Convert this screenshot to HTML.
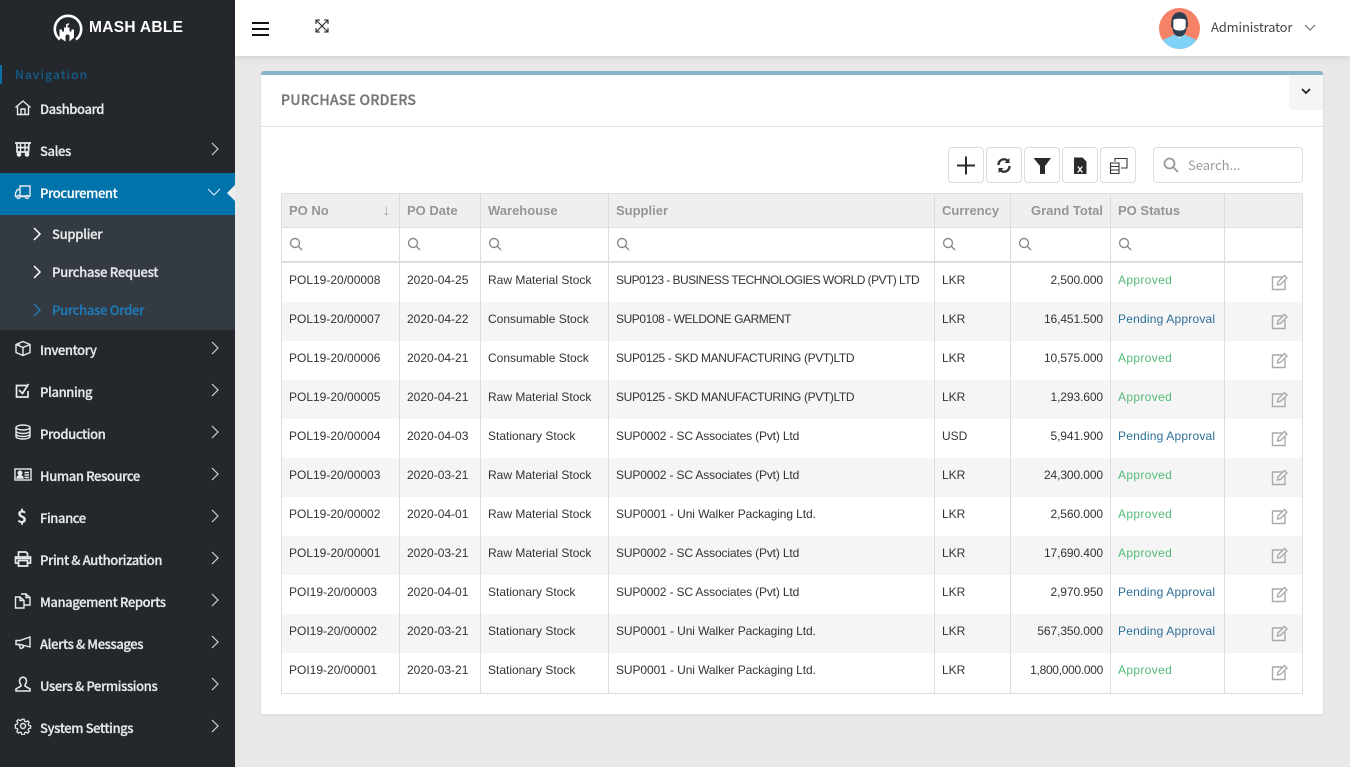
<!DOCTYPE html>
<html><head><meta charset="utf-8"><style>
*{box-sizing:border-box}
html,body{margin:0;padding:0;width:1350px;height:767px;overflow:hidden;background:#e8e8e8;font-family:"Liberation Sans",sans-serif;position:relative}
.side{position:absolute;left:0;top:0;width:235px;height:767px;background:#24282d}
.it{position:absolute;left:40px;font:500 13px/20px "Noto Sans CJK JP",sans-serif;color:#e6e8ea;white-space:nowrap;letter-spacing:-.4px;-webkit-text-stroke:.25px #e6e8ea}
.ic{position:absolute;left:14px;width:18px;height:18px;fill:none;stroke:#e8eaec;stroke-width:1.4}
.ch{position:absolute;left:210px;width:10px;height:14px;fill:none;stroke:#d0d3d6;stroke-width:1.2}
.sub{position:absolute;left:52px;font:500 13px/20px "Noto Sans CJK JP",sans-serif;color:#e6e8ea;white-space:nowrap;letter-spacing:-.3px;-webkit-text-stroke:.25px currentColor}
.top{position:absolute;left:235px;top:0;width:1115px;height:56px;background:#fff;box-shadow:0 1px 6px rgba(0,0,0,.13)}
.card{position:absolute;left:261px;top:71px;width:1062px;height:643px;background:#fff;border-top:4px solid #86b5cd;border-radius:3px 3px 0 0;box-shadow:0 1px 3px rgba(0,0,0,.07)}
.btn{position:absolute;top:147px;height:36px;width:36px;border:1px solid #dcdcdc;border-radius:4px;background:#fff}
.btn svg{position:absolute;left:0;top:0}
table{position:absolute;left:281px;top:193px;width:1021px;border-collapse:collapse;table-layout:fixed;font-size:12px;color:#333}
td,th{border:1px solid #ddd;padding:0 7px;overflow:hidden;white-space:nowrap;text-align:left}
tr.h th{height:34px;background:#efefef;color:#959595;font-weight:bold;font-size:13px}
tr.f td{height:34px;border-bottom:2px solid #ddd}
tbody tr{height:39px}
tbody tr:first-child{height:40px}
tbody td{vertical-align:top;padding-top:10px;border-top:0;border-bottom:0;font-size:12px;line-height:15px}
tbody tr:nth-child(even){background:#f5f5f5}
tbody tr:last-child{height:41px}
tbody tr:last-child td{border-bottom:1px solid #ddd}
.r{text-align:right;letter-spacing:-.1px}
.a{color:#55bb78;letter-spacing:.35px}.p{color:#2d6f98;letter-spacing:.2px}
.s1{letter-spacing:-.55px}.s2{letter-spacing:-.36px}.s3{letter-spacing:-.09px}.s4{letter-spacing:-.15px}.s5{letter-spacing:-.44px}
.e{display:block;margin:1px 0 0 39px;width:17px;height:17px;fill:none;stroke:#aaa;stroke-width:1.4}
.m{display:block;width:14px;height:14px;fill:none;stroke:#8a8a8a;stroke-width:1.4}
</style></head><body>

<div class="side">
<svg style="position:absolute;left:53px;top:13px" width="30" height="30" viewBox="0 0 30 30"><path d="M7 26.500A13.200 13.200 0 1 1 23 26.500" fill="none" stroke="#fff" stroke-width="2.600"/><path d="M6.500 24.500V16.500h2.500v2h2v-4h2v-3l3-1.500v1.500l-1.500 1v2h2v4h2v-2h2.500v8l-4.500 4v-5a2 2 0 0 0-4 0v5z" fill="#fff"/></svg>
<div style="position:absolute;left:89px;top:18px;font:bold 15.500px/20px 'Liberation Sans',sans-serif;color:#fff;letter-spacing:.3px;white-space:nowrap">MASH ABLE</div>
<div style="position:absolute;left:0;top:65px;width:2px;height:19px;background:#0b6fa6"></div>
<div style="position:absolute;left:15px;top:66px;font:500 12px/17px 'Noto Sans CJK JP',sans-serif;color:#135f8c;letter-spacing:1.100px">Navigation</div>

<div style="position:absolute;left:0;top:173px;width:235px;height:42px;background:#0073aa"></div>
<div style="position:absolute;left:0;top:215px;width:235px;height:115px;background:#343a42"></div>
<svg style="position:absolute;left:227px;top:185px" width="8" height="16"><path d="M8 0L0 8l8 8z" fill="#eee"/></svg>

<svg class="ic" style="top:99px" viewBox="0 0 18 18"><path d="M1.500 8.500L9 2l7.500 6.500M3.500 7.500V15.500H14.500V7.500M7 15.500V10h4v5.500"/></svg><div class="it" style="top:99px">Dashboard</div>
<svg class="ic" style="top:140px" viewBox="0 0 18 18"><path d="M1 3H17M3 3V12H14.500L15 3M3 7.500H15" stroke-width="1.700"/><path d="M6.500 3V12M11 3V12"/><circle cx="5" cy="14.500" r="1.600" fill="#e8eaec"/><circle cx="13" cy="14.500" r="1.600" fill="#e8eaec"/></svg><div class="it" style="top:141px">Sales</div><svg class="ch" style="top:142px" viewBox="0 0 10 14"><path d="M2 1l6 6-6 6"/></svg>
<svg class="ic" style="top:183px" viewBox="0 0 18 18"><path d="M6 13V3H16V13H6M6 6.500H3.500L1.500 10V13.500H4M6 13.500H12"/><circle cx="4.500" cy="14" r="1.500"/><circle cx="13" cy="14" r="1.500"/></svg><div class="it" style="top:183px;color:#fff">Procurement</div><svg style="position:absolute;left:207px;top:187px;fill:none;stroke:#d8e8f0;stroke-width:1.200" width="14" height="10"><path d="M1 2l6 6 6-6"/></svg>

<svg class="ch" style="left:32px;top:227px;stroke:#fff;stroke-width:1.500" viewBox="0 0 10 14"><path d="M2 1l6 6-6 6"/></svg><div class="sub" style="top:224px">Supplier</div>
<svg class="ch" style="left:32px;top:265px;stroke:#fff;stroke-width:1.500" viewBox="0 0 10 14"><path d="M2 1l6 6-6 6"/></svg><div class="sub" style="top:262px">Purchase Request</div>
<svg class="ch" style="left:32px;top:303px;stroke:#1f7ab8;stroke-width:1.500" viewBox="0 0 10 14"><path d="M2 1l6 6-6 6"/></svg><div class="sub" style="top:300px;color:#1f7ab8">Purchase Order</div>

<svg class="ic" style="top:339px" viewBox="0 0 18 18"><path d="M2 5.500L9 2.500l7 3v8l-7 3-7-3zM2 5.500l7 3 7-3M9 8.500v8M5 4v3"/></svg><div class="it" style="top:340px">Inventory</div><svg class="ch" style="top:341px" viewBox="0 0 10 14"><path d="M2 1l6 6-6 6"/></svg>
<svg class="ic" style="top:382px" viewBox="0 0 18 18"><path d="M13.500 3.500H2.500V15H14V9M5 8l3.500 3.500L14.500 2" stroke-width="1.700"/></svg><div class="it" style="top:382px">Planning</div><svg class="ch" style="top:383px" viewBox="0 0 10 14"><path d="M2 1l6 6-6 6"/></svg>
<svg class="ic" style="top:423px" viewBox="0 0 18 18"><ellipse cx="9" cy="4.500" rx="7" ry="2.500"/><path d="M2 4.500v9c0 1.400 3 2.500 7 2.500s7-1.100 7-2.500v-9M2 8c0 1.400 3 2.500 7 2.500s7-1.100 7-2.500M2 11c0 1.400 3 2.500 7 2.500s7-1.100 7-2.500"/></svg><div class="it" style="top:424px">Production</div><svg class="ch" style="top:425px" viewBox="0 0 10 14"><path d="M2 1l6 6-6 6"/></svg>
<svg class="ic" style="top:466px" viewBox="0 0 18 18"><rect x="1" y="3" width="16" height="11"/><path d="M10.500 6.500H15M10.500 9H15M10.500 11.500H15"/><circle cx="6" cy="7" r="1.800" fill="#e8eaec"/><path d="M3 12c0-3 6-3 6 0z" fill="#e8eaec"/></svg><div class="it" style="top:466px">Human Resource</div><svg class="ch" style="top:467px" viewBox="0 0 10 14"><path d="M2 1l6 6-6 6"/></svg>
<div style="position:absolute;left:17px;top:505px;font:bold 17px/22px 'Noto Sans CJK JP',sans-serif;color:#e8eaec">$</div><div class="it" style="top:508px">Finance</div><svg class="ch" style="top:509px" viewBox="0 0 10 14"><path d="M2 1l6 6-6 6"/></svg>
<svg class="ic" style="top:550px" viewBox="0 0 18 18"><path d="M4.500 6V2H12l1.500 1.500V6M4 13H1.500V7H16.500V13H14M4.500 10.500H13.500V16H4.500z" stroke-width="1.700"/><path d="M2 8.500h14"/></svg><div class="it" style="top:550px">Print &amp; Authorization</div><svg class="ch" style="top:551px" viewBox="0 0 10 14"><path d="M2 1l6 6-6 6"/></svg>
<svg class="ic" style="top:592px" viewBox="0 0 18 18"><path d="M6 5H1.500V16H10V8.500zM6 5V8.500H10M7 2H12V5.500H16V13H10.500M12 2l4 3.500"/></svg><div class="it" style="top:592px">Management Reports</div><svg class="ch" style="top:593px" viewBox="0 0 10 14"><path d="M2 1l6 6-6 6"/></svg>
<svg class="ic" style="top:634px" viewBox="0 0 18 18"><path d="M16 3V13L6 10.500H2V6.500H6zM5 10.500l1.500 4 3-1-1-2.500"/></svg><div class="it" style="top:634px">Alerts &amp; Messages</div><svg class="ch" style="top:635px" viewBox="0 0 10 14"><path d="M2 1l6 6-6 6"/></svg>
<svg class="ic" style="top:675px" viewBox="0 0 18 18"><path d="M5.500 6a3.500 3.800 0 1 1 7 0c0 2-1 3-1.500 4v1l5 3v2H2v-2l5-3v-1C6.500 9 5.500 8 5.500 6z" stroke-width="1.600"/></svg><div class="it" style="top:676px">Users &amp; Permissions</div><svg class="ch" style="top:677px" viewBox="0 0 10 14"><path d="M2 1l6 6-6 6"/></svg>
<svg class="ic" style="top:717px" viewBox="0 0 18 18"><circle cx="9" cy="9" r="2.500"/><path d="M7.700 1.500h2.600l.4 2.200 1.500.7 1.900-1.200 1.800 1.800-1.200 1.900.7 1.500 2.100.4v2.600l-2.100.4-.7 1.500 1.200 1.900-1.800 1.800-1.900-1.200-1.500.7-.4 2.200H7.700l-.4-2.200-1.500-.7-1.900 1.200-1.800-1.800 1.200-1.900-.7-1.500-2.100-.4V7.400l2.100-.4.700-1.500-1.200-1.900 1.800-1.800 1.900 1.200 1.500-.7z" transform="translate(.9 .9) scale(.9)"/></svg><div class="it" style="top:718px">System Settings</div><svg class="ch" style="top:719px" viewBox="0 0 10 14"><path d="M2 1l6 6-6 6"/></svg>
</div>

<div class="top">
<div style="position:absolute;left:17px;top:22px;width:17px;height:14px;border-top:2px solid #111;border-bottom:2px solid #111"></div>
<div style="position:absolute;left:17px;top:28px;width:17px;height:2px;background:#111"></div>
<svg style="position:absolute;left:80px;top:19px;fill:none;stroke:#222;stroke-width:1.100" width="14" height="14" viewBox="0 0 14 14"><path d="M1 1l12 12M13 1L1 13M1 5V1h4M9 1h4v4M1 9v4h4M9 13h4V9"/></svg>
<svg style="position:absolute;left:924px;top:8px" width="41" height="41" viewBox="0 0 40 40"><defs><clipPath id="c"><circle cx="20" cy="20" r="20"/></clipPath></defs><g clip-path="url(#c)"><rect width="40" height="40" fill="#f58166"/><path d="M4 31l11-5h10l11 5v9H4z" fill="#7fd1f7"/><path d="M15.500 26l4.500 3.500 4.500-3.500-.500-4h-8z" fill="#fff"/><path d="M12 19C11 8 15 4 20 4s9 4 8 15z" fill="#2c3e50"/><path d="M13 18l2 3h10l2-3c0 6-3 10-7 10s-7-4-7-10z" fill="#2c3e50"/><path d="M14 11.500c3-1.500 9-1.500 12 0V18c0 3-2.500 4-6 4s-6-1-6-4z" fill="#fff"/></g></svg>
<div style="position:absolute;left:976px;top:17px;font:13px/20px 'Noto Sans CJK JP',sans-serif;color:#444;white-space:nowrap;letter-spacing:-.15px">Administrator</div>
<svg style="position:absolute;left:1069px;top:24px;fill:none;stroke:#666;stroke-width:1" width="12" height="8"><path d="M1 1l5 5 5-5"/></svg>
</div>

<div class="card"></div>
<div style="position:absolute;left:281px;top:91px;font:500 14px/18px 'Noto Sans CJK JP',sans-serif;color:#757575;white-space:nowrap;letter-spacing:.2px;-webkit-text-stroke:.3px #757575">PURCHASE ORDERS</div>
<div style="position:absolute;left:261px;top:126px;width:1062px;height:1px;background:#e2e2e2"></div>
<div style="position:absolute;left:1289px;top:75px;width:34px;height:35px;background:#f5f5f5;border-radius:0 0 0 4px"></div>
<svg style="position:absolute;left:1301px;top:88px;fill:none;stroke:#222;stroke-width:1.800" width="10" height="7"><path d="M1 1l4 4 4-4"/></svg>

<div class="btn" style="left:948px"><svg width="36" height="36" fill="none" stroke="#2a2a2a" stroke-width="2"><path d="M17 8.500v18M8 17.500h18"/></svg></div>
<div class="btn" style="left:986px;width:36px"><svg width="36" height="36" fill="none" stroke="#333" stroke-width="2.400"><path d="M11.500 17a5.500 5.500 0 0 1 9.500-4M22.500 18a5.500 5.500 0 0 1-9.500 4"/><path d="M22.500 10v5h-5zM11.500 25v-5h5z" fill="#333" stroke="none"/></svg></div>
<div class="btn" style="left:1024px"><svg width="36" height="36"><path d="M8.500 10H26L20 18V26L15 26V18z" fill="#2a2a2a"/></svg></div>
<div class="btn" style="left:1062px"><svg width="36" height="36"><path d="M11 9.500h8.500l4 4V26H11z" fill="#2a2a2a"/><text x="14" y="24.500" font-family="Liberation Sans" font-weight="bold" font-size="11" fill="#fff">x</text></svg></div>
<div class="btn" style="left:1100px"><svg width="36" height="36" fill="none" stroke="#333" stroke-width="1.100"><path d="M14 13.500V10.500H26V20H20M9.500 15H18V25.500H9.500zM9.500 18.500H18M9.500 22H18"/></svg></div>
<div style="position:absolute;left:1153px;top:147px;width:150px;height:36px;border:1px solid #dcdcdc;border-radius:4px"></div>
<svg style="position:absolute;left:1163px;top:157px;fill:none;stroke:#999;stroke-width:1.800" width="16" height="16"><circle cx="6.500" cy="6.500" r="5"/><path d="M10 10l5 5"/></svg>
<div style="position:absolute;left:1188px;top:156px;font:13px/18px 'Noto Sans CJK JP',sans-serif;color:#999">Search...</div>

<table>
<colgroup><col style="width:118px"><col style="width:81px"><col style="width:128px"><col style="width:326px"><col style="width:76px"><col style="width:100px"><col style="width:114px"><col style="width:78px"></colgroup>
<thead>
<tr class="h"><th style="position:relative">PO No<span style="position:absolute;right:9px;top:7px;font-weight:normal;font-size:15px;line-height:20px;color:#999">↓</span></th><th>PO Date</th><th>Warehouse</th><th>Supplier</th><th>Currency</th><th class="r" style="letter-spacing:0">Grand Total</th><th>PO Status</th><th></th></tr>
<tr class="f"><td><svg class="m"><circle cx="6" cy="6" r="4.500"/><path d="M9 9l4 4"/></svg></td><td><svg class="m"><circle cx="6" cy="6" r="4.500"/><path d="M9 9l4 4"/></svg></td><td><svg class="m"><circle cx="6" cy="6" r="4.500"/><path d="M9 9l4 4"/></svg></td><td><svg class="m"><circle cx="6" cy="6" r="4.500"/><path d="M9 9l4 4"/></svg></td><td><svg class="m"><circle cx="6" cy="6" r="4.500"/><path d="M9 9l4 4"/></svg></td><td><svg class="m"><circle cx="6" cy="6" r="4.500"/><path d="M9 9l4 4"/></svg></td><td><svg class="m"><circle cx="6" cy="6" r="4.500"/><path d="M9 9l4 4"/></svg></td><td></td></tr>
</thead>
<tbody>
<tr><td>POL19-20/00008</td><td>2020-04-25</td><td>Raw Material Stock</td><td class="s1">SUP0123 - BUSINESS TECHNOLOGIES WORLD (PVT) LTD</td><td>LKR</td><td class="r">2,500.000</td><td class="a">Approved</td><td><svg class="e"><path d="M11 3H1.500V15.500H14V7M6.500 11l.5-3L13.500 1.500l2.500 2.500L9.500 10.500z"/></svg></td></tr>
<tr><td>POL19-20/00007</td><td>2020-04-22</td><td>Consumable Stock</td><td class="s5">SUP0108 - WELDONE GARMENT</td><td>LKR</td><td class="r">16,451.500</td><td class="p">Pending Approval</td><td><svg class="e"><path d="M11 3H1.500V15.500H14V7M6.500 11l.5-3L13.500 1.500l2.500 2.500L9.500 10.500z"/></svg></td></tr>
<tr><td>POL19-20/00006</td><td>2020-04-21</td><td>Consumable Stock</td><td class="s2">SUP0125 - SKD MANUFACTURING (PVT)LTD</td><td>LKR</td><td class="r">10,575.000</td><td class="a">Approved</td><td><svg class="e"><path d="M11 3H1.500V15.500H14V7M6.500 11l.5-3L13.500 1.500l2.500 2.500L9.500 10.500z"/></svg></td></tr>
<tr><td>POL19-20/00005</td><td>2020-04-21</td><td>Raw Material Stock</td><td class="s2">SUP0125 - SKD MANUFACTURING (PVT)LTD</td><td>LKR</td><td class="r">1,293.600</td><td class="a">Approved</td><td><svg class="e"><path d="M11 3H1.500V15.500H14V7M6.500 11l.5-3L13.500 1.500l2.500 2.500L9.500 10.500z"/></svg></td></tr>
<tr><td>POL19-20/00004</td><td>2020-04-03</td><td>Stationary Stock</td><td class="s4">SUP0002 - SC Associates (Pvt) Ltd</td><td>USD</td><td class="r">5,941.900</td><td class="p">Pending Approval</td><td><svg class="e"><path d="M11 3H1.500V15.500H14V7M6.500 11l.5-3L13.500 1.500l2.500 2.500L9.500 10.500z"/></svg></td></tr>
<tr><td>POL19-20/00003</td><td>2020-03-21</td><td>Raw Material Stock</td><td class="s4">SUP0002 - SC Associates (Pvt) Ltd</td><td>LKR</td><td class="r">24,300.000</td><td class="a">Approved</td><td><svg class="e"><path d="M11 3H1.500V15.500H14V7M6.500 11l.5-3L13.500 1.500l2.500 2.500L9.500 10.500z"/></svg></td></tr>
<tr><td>POL19-20/00002</td><td>2020-04-01</td><td>Raw Material Stock</td><td class="s3">SUP0001 - Uni Walker Packaging Ltd.</td><td>LKR</td><td class="r">2,560.000</td><td class="a">Approved</td><td><svg class="e"><path d="M11 3H1.500V15.500H14V7M6.500 11l.5-3L13.500 1.500l2.500 2.500L9.500 10.500z"/></svg></td></tr>
<tr><td>POL19-20/00001</td><td>2020-03-21</td><td>Raw Material Stock</td><td class="s4">SUP0002 - SC Associates (Pvt) Ltd</td><td>LKR</td><td class="r">17,690.400</td><td class="a">Approved</td><td><svg class="e"><path d="M11 3H1.500V15.500H14V7M6.500 11l.5-3L13.500 1.500l2.500 2.500L9.500 10.500z"/></svg></td></tr>
<tr><td>POI19-20/00003</td><td>2020-04-01</td><td>Stationary Stock</td><td class="s4">SUP0002 - SC Associates (Pvt) Ltd</td><td>LKR</td><td class="r">2,970.950</td><td class="p">Pending Approval</td><td><svg class="e"><path d="M11 3H1.500V15.500H14V7M6.500 11l.5-3L13.500 1.500l2.500 2.500L9.500 10.500z"/></svg></td></tr>
<tr><td>POI19-20/00002</td><td>2020-03-21</td><td>Stationary Stock</td><td class="s3">SUP0001 - Uni Walker Packaging Ltd.</td><td>LKR</td><td class="r">567,350.000</td><td class="p">Pending Approval</td><td><svg class="e"><path d="M11 3H1.500V15.500H14V7M6.500 11l.5-3L13.500 1.500l2.500 2.500L9.500 10.500z"/></svg></td></tr>
<tr><td>POI19-20/00001</td><td>2020-03-21</td><td>Stationary Stock</td><td class="s3">SUP0001 - Uni Walker Packaging Ltd.</td><td>LKR</td><td class="r" style="letter-spacing:-.3px">1,800,000.000</td><td class="a">Approved</td><td><svg class="e"><path d="M11 3H1.500V15.500H14V7M6.500 11l.5-3L13.500 1.500l2.500 2.500L9.500 10.500z"/></svg></td></tr>
</tbody>
</table>
</body></html>
